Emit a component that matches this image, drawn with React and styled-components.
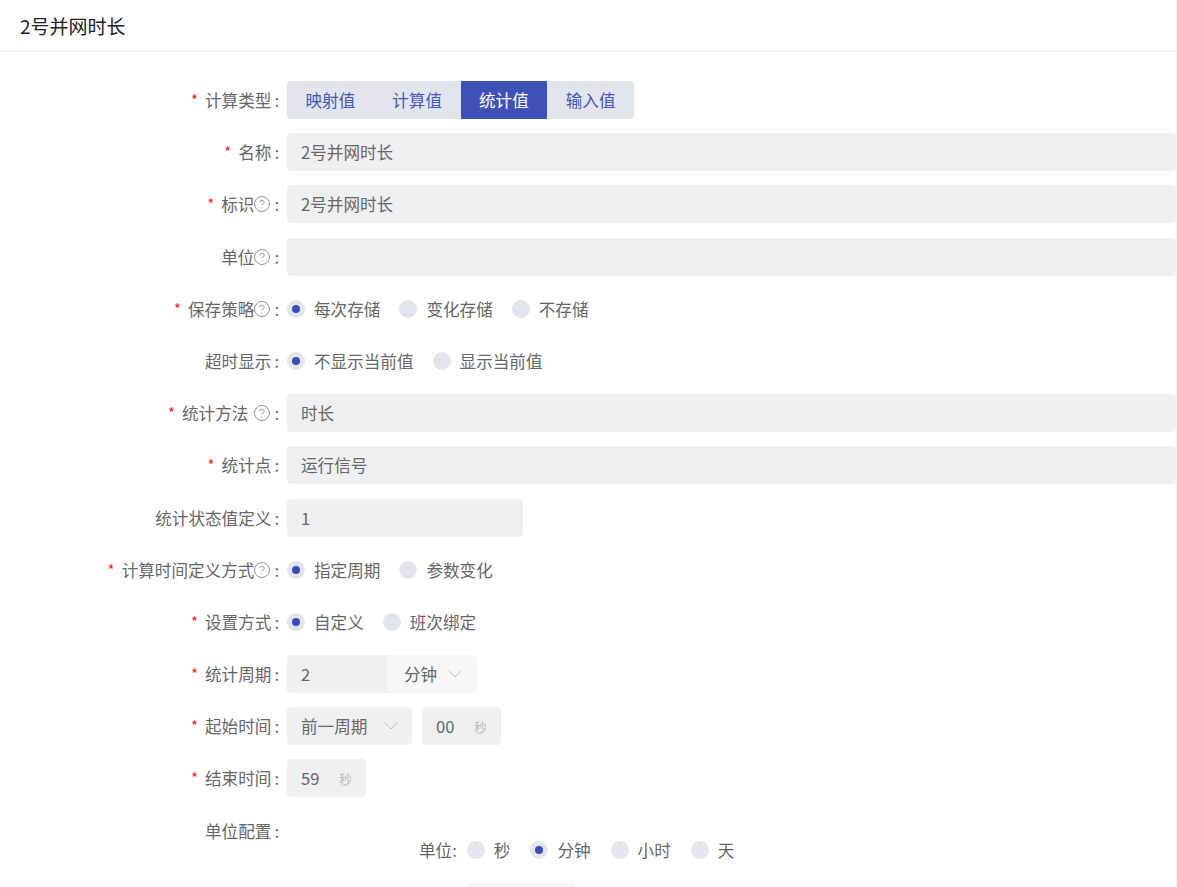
import React, { useState } from 'react'
import styled, { createGlobalStyle } from 'styled-components'
import { CircleHelp, ChevronDown } from 'lucide-react'

const GlobalStyle = createGlobalStyle`
  body {
    margin: 0;
    overflow: hidden;
    background: #fff;
    font-family: "Noto Sans CJK SC", "Noto Sans", sans-serif;
  }
`

const Page = styled.div`
  width: 1176px;
  height: 887px;
  border-right: 1px solid #f3f3f5;
  overflow: hidden;
`

const Header = styled.div`
  height: 52px;
  border-bottom: 1px solid #ececee;
  display: flex;
  align-items: center;
  padding-left: 20px;
  box-sizing: border-box;
  font-size: 19px;
  color: #222;
`

const Form = styled.div`
  padding-top: 29px;
`

const Row = styled.div`
  display: grid;
  grid-template-columns: 279px 1fr;
  column-gap: 8px;
  align-items: ${p => (p.top ? 'start' : 'center')};
  min-height: 38px;
  margin-bottom: 14.2px;
`

const Label = styled.div`
  text-align: right;
  font-size: 16.6px;
  line-height: 38px;
  color: #666;
  white-space: nowrap;
  display: flex;
  justify-content: flex-end;
  align-items: center;
`

const Star = styled.span`
  color: #f5222d;
  font-size: 15px;
  margin-right: 7px;
`

const Help = styled(CircleHelp)`
  color: #888;
  margin-left: ${p => (p.$space ? '5px' : '-1px')};
`

const Colon = styled.span`
  margin-left: 3px;
`

const Segment = styled.div`
  display: flex;
  width: max-content;
  height: 38px;
  border-radius: 4px;
  overflow: hidden;
  background: #e3e5ec;
`

const SegButton = styled.div`
  width: 86.75px;
  display: flex;
  align-items: center;
  justify-content: center;
  font-size: 16.6px;
  color: ${p => (p.$active ? '#fff' : '#4555b8')};
  background: ${p => (p.$active ? '#3f51b5' : 'transparent')};
  cursor: pointer;
`

const Input = styled.div`
  height: 38px;
  width: ${p => p.$w || '100%'};
  box-sizing: border-box;
  background: ${p => p.$bg || '#eff0f2'};
  border-radius: ${p => p.$radius || '4px'};
  padding: 0 ${p => p.$pr || '14px'} 0 ${p => p.$pl || '14px'};
  display: flex;
  align-items: center;
  justify-content: space-between;
  font-size: 16.6px;
  color: #666;
`

const Suffix = styled.span`
  font-size: 13px;
  color: #bbb;
`

const Chevron = styled(ChevronDown)`
  color: #b8b8b8;
`

const Inline = styled.div`
  display: flex;
  align-items: center;
  gap: ${p => p.$gap || '0px'};
`

const RadioGroup = styled.div`
  display: flex;
  align-items: center;
  gap: ${p => p.$gap || '19px'};
`

const RadioItem = styled.label`
  display: flex;
  align-items: center;
  gap: 9px;
  font-size: 16.6px;
  color: #666;
  cursor: pointer;
`

const Circle = styled.span`
  width: 18px;
  height: 18px;
  border-radius: 50%;
  background: #e3e5ec;
  display: flex;
  align-items: center;
  justify-content: center;
  &::after {
    content: '';
    width: 8px;
    height: 8px;
    border-radius: 50%;
    background: ${p => (p.$on ? '#3b4db5' : 'transparent')};
  }
`

const Nested = styled.div`
  padding-top: 28px;
  margin-left: 132px;
`

const NestedRow = styled.div`
  display: flex;
  align-items: center;
  gap: 10px;
  height: 20px;
`

const NestedLabel = styled.span`
  font-size: 16.6px;
  color: #666;
  white-space: nowrap;
`

const NestedBox = styled.div`
  margin-top: 23px;
  margin-left: 48px;
  width: 108px;
  height: 38px;
  border-radius: 4px;
  background: #f4f5f7;
`

const Radios = ({ items, value, gap }) => {
  const [sel, setSel] = useState(value)
  return (
    <RadioGroup $gap={gap}>
      {items.map(it => (
        <RadioItem key={it} onClick={() => setSel(it)}>
          <Circle $on={sel === it} />
          {it}
        </RadioItem>
      ))}
    </RadioGroup>
  )
}

const FieldLabel = ({ req, help, space, children }) => (
  <Label>
    {req && <Star>*</Star>}
    {children}
    {help && <Help size={18} strokeWidth={1.2} $space={space} />}
    <Colon>:</Colon>
  </Label>
)

export default function App() {
  const [type, setType] = useState('统计值')
  return (
    <Page>
      <GlobalStyle />
      <Header>2号并网时长</Header>
      <Form>
        <Row>
          <FieldLabel req>计算类型</FieldLabel>
          <Segment>
            {['映射值', '计算值', '统计值', '输入值'].map(t => (
              <SegButton key={t} $active={type === t} onClick={() => setType(t)}>
                {t}
              </SegButton>
            ))}
          </Segment>
        </Row>
        <Row>
          <FieldLabel req>名称</FieldLabel>
          <Input>2号并网时长</Input>
        </Row>
        <Row>
          <FieldLabel req help>标识</FieldLabel>
          <Input>2号并网时长</Input>
        </Row>
        <Row>
          <FieldLabel help>单位</FieldLabel>
          <Input />
        </Row>
        <Row>
          <FieldLabel req help>保存策略</FieldLabel>
          <Radios items={['每次存储', '变化存储', '不存储']} value="每次存储" />
        </Row>
        <Row>
          <FieldLabel>超时显示</FieldLabel>
          <Radios items={['不显示当前值', '显示当前值']} value="不显示当前值" />
        </Row>
        <Row>
          <FieldLabel req help space>统计方法</FieldLabel>
          <Input>时长</Input>
        </Row>
        <Row>
          <FieldLabel req>统计点</FieldLabel>
          <Input>运行信号</Input>
        </Row>
        <Row>
          <FieldLabel>统计状态值定义</FieldLabel>
          <Input $w="236px">1</Input>
        </Row>
        <Row>
          <FieldLabel req help>计算时间定义方式</FieldLabel>
          <Radios items={['指定周期', '参数变化']} value="指定周期" />
        </Row>
        <Row>
          <FieldLabel req>设置方式</FieldLabel>
          <Radios items={['自定义', '班次绑定']} value="自定义" />
        </Row>
        <Row>
          <FieldLabel req>统计周期</FieldLabel>
          <Inline>
            <Input $w="100px" $radius="4px 0 0 4px">2</Input>
            <Input $w="90px" $bg="#f7f7f9" $radius="0 4px 4px 0" $pl="17px" $pr="10px">
              分钟
              <Chevron size={24} strokeWidth={0.9} />
            </Input>
          </Inline>
        </Row>
        <Row>
          <FieldLabel req>起始时间</FieldLabel>
          <Inline $gap="10px">
            <Input $w="125px" $pr="9px">
              前一周期
              <Chevron size={24} strokeWidth={0.9} />
            </Input>
            <Input $w="79px" $pr="14px">
              00
              <Suffix>秒</Suffix>
            </Input>
          </Inline>
        </Row>
        <Row>
          <FieldLabel req>结束时间</FieldLabel>
          <Input $w="79px" $pr="14px">
            59
            <Suffix>秒</Suffix>
          </Input>
        </Row>
        <Row top>
          <FieldLabel>单位配置</FieldLabel>
          <Nested>
            <NestedRow>
              <NestedLabel>单位:</NestedLabel>
              <Radios items={['秒', '分钟', '小时', '天']} value="分钟" gap="20px" />
            </NestedRow>
            <NestedBox />
          </Nested>
        </Row>
      </Form>
    </Page>
  )
}
